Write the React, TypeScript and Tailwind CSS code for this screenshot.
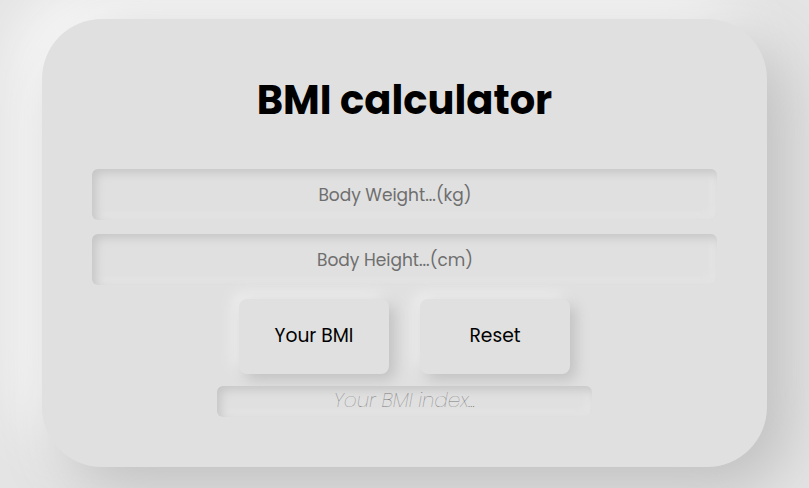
import React from 'react';

const font = { fontFamily: '"Poppins", "Open Sans", "Liberation Sans", sans-serif' };

export default function App() {
  return (
    <div className="min-h-screen w-full bg-[#e4e4e4] flex justify-center pt-[19px] pb-[21px]" style={font}>
      <div className="w-[725px] h-[448px] rounded-[60px] bg-[#e0e0e0] shadow-[20px_20px_60px_#bebebe,-20px_-20px_60px_#ffffff] flex flex-col items-center px-[50px] pt-[51px]">
        <h1 className="text-[40px] leading-[60px] font-bold text-black">BMI calculator</h1>

        <div className="w-full mt-[39px] flex flex-col gap-[14px]">
          <input
            placeholder="Body Weight...(kg)"
            className="w-full h-[51px] rounded-[6px] bg-[#e0e0e0] text-center pr-[19px] text-[17px] text-[#555] placeholder:text-[#6e6e6e] outline-none shadow-[inset_4px_4px_10px_#c6c6c6,inset_-4px_-4px_10px_#e6e6e6]"
          />
          <input
            placeholder="Body Height...(cm)"
            className="w-full h-[51px] rounded-[6px] bg-[#e0e0e0] text-center pr-[19px] text-[17px] text-[#555] placeholder:text-[#6e6e6e] outline-none shadow-[inset_4px_4px_10px_#c6c6c6,inset_-4px_-4px_10px_#e6e6e6]"
          />
        </div>

        <div className="mt-[14px] flex gap-[31px]">
          <button className="w-[150px] h-[75px] rounded-[8px] bg-[#e0e0e0] text-[18.7px] text-black shadow-[6px_6px_14px_#c2c2c2,-6px_-6px_14px_#eeeeee]">
            Your BMI
          </button>
          <button className="w-[150px] h-[75px] rounded-[8px] bg-[#e0e0e0] text-[18.7px] text-black shadow-[6px_6px_14px_#c2c2c2,-6px_-6px_14px_#eeeeee]">
            Reset
          </button>
        </div>

        <div className="mt-[12px] w-[375px] h-[31px] pb-[3px] rounded-[6px] bg-[#e0e0e0] flex items-center justify-center shadow-[inset_4px_4px_10px_#c6c6c6,inset_-4px_-4px_10px_#e6e6e6]">
          <span className="text-[20px] leading-[24px] italic font-extralight text-[#7a7a7a]">Your BMI index...</span>
        </div>
      </div>
    </div>
  );
}
